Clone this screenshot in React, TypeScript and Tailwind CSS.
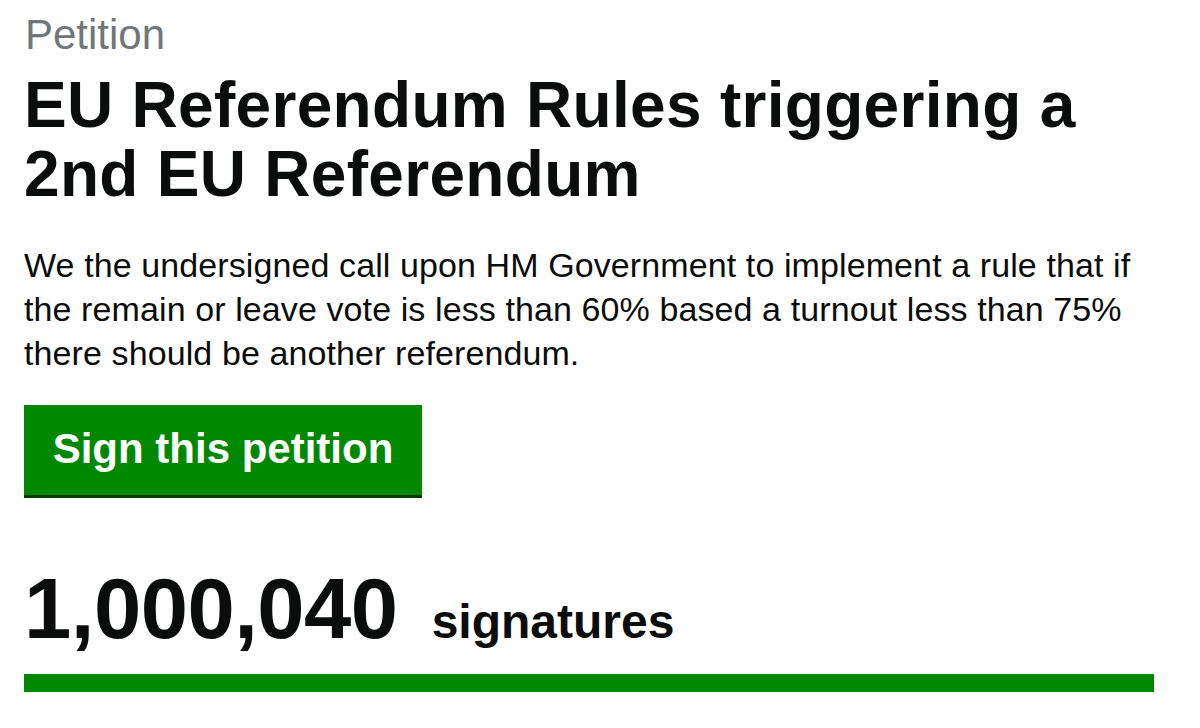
export default function App() {
  return (
    <div className="min-h-[728px] w-[1200px] bg-white pl-6 pt-[10px] text-[#0b0c0c] font-['Liberation_Sans',Arial,sans-serif]">
      <p className="pl-[1px] text-[42px] leading-[50px] text-[#6f777b]">Petition</p>
      <h1 className="mt-[11px] w-[1150px] text-[64px] font-bold leading-[69px] tracking-[0.3px]">
        EU Referendum Rules triggering a 2nd EU Referendum
      </h1>
      <p className="mt-[34px] w-[1140px] text-[34px] leading-[44px] tracking-[0.1px]">
        We the undersigned call upon HM Government to implement a rule that if the remain or leave vote is less than 60% based a turnout less than 75% there should be another referendum.
      </p>
      <button className="mt-[30px] flex h-[93px] w-[398px] items-center justify-center border-b-[3px] border-[#003c00] bg-[#008800] pb-1 text-[42px] font-bold text-white">
        Sign this petition
      </button>
      <div className="mt-[66px] flex items-baseline gap-[34px]">
        <span className="text-[85px] font-bold leading-[90px] tracking-[-0.5px]">1,000,040</span>
        <span className="text-[48px] font-bold">signatures</span>
      </div>
      <div className="mt-[16px] h-[18px] w-[1130px] bg-[#008800]" />
    </div>
  );
}
